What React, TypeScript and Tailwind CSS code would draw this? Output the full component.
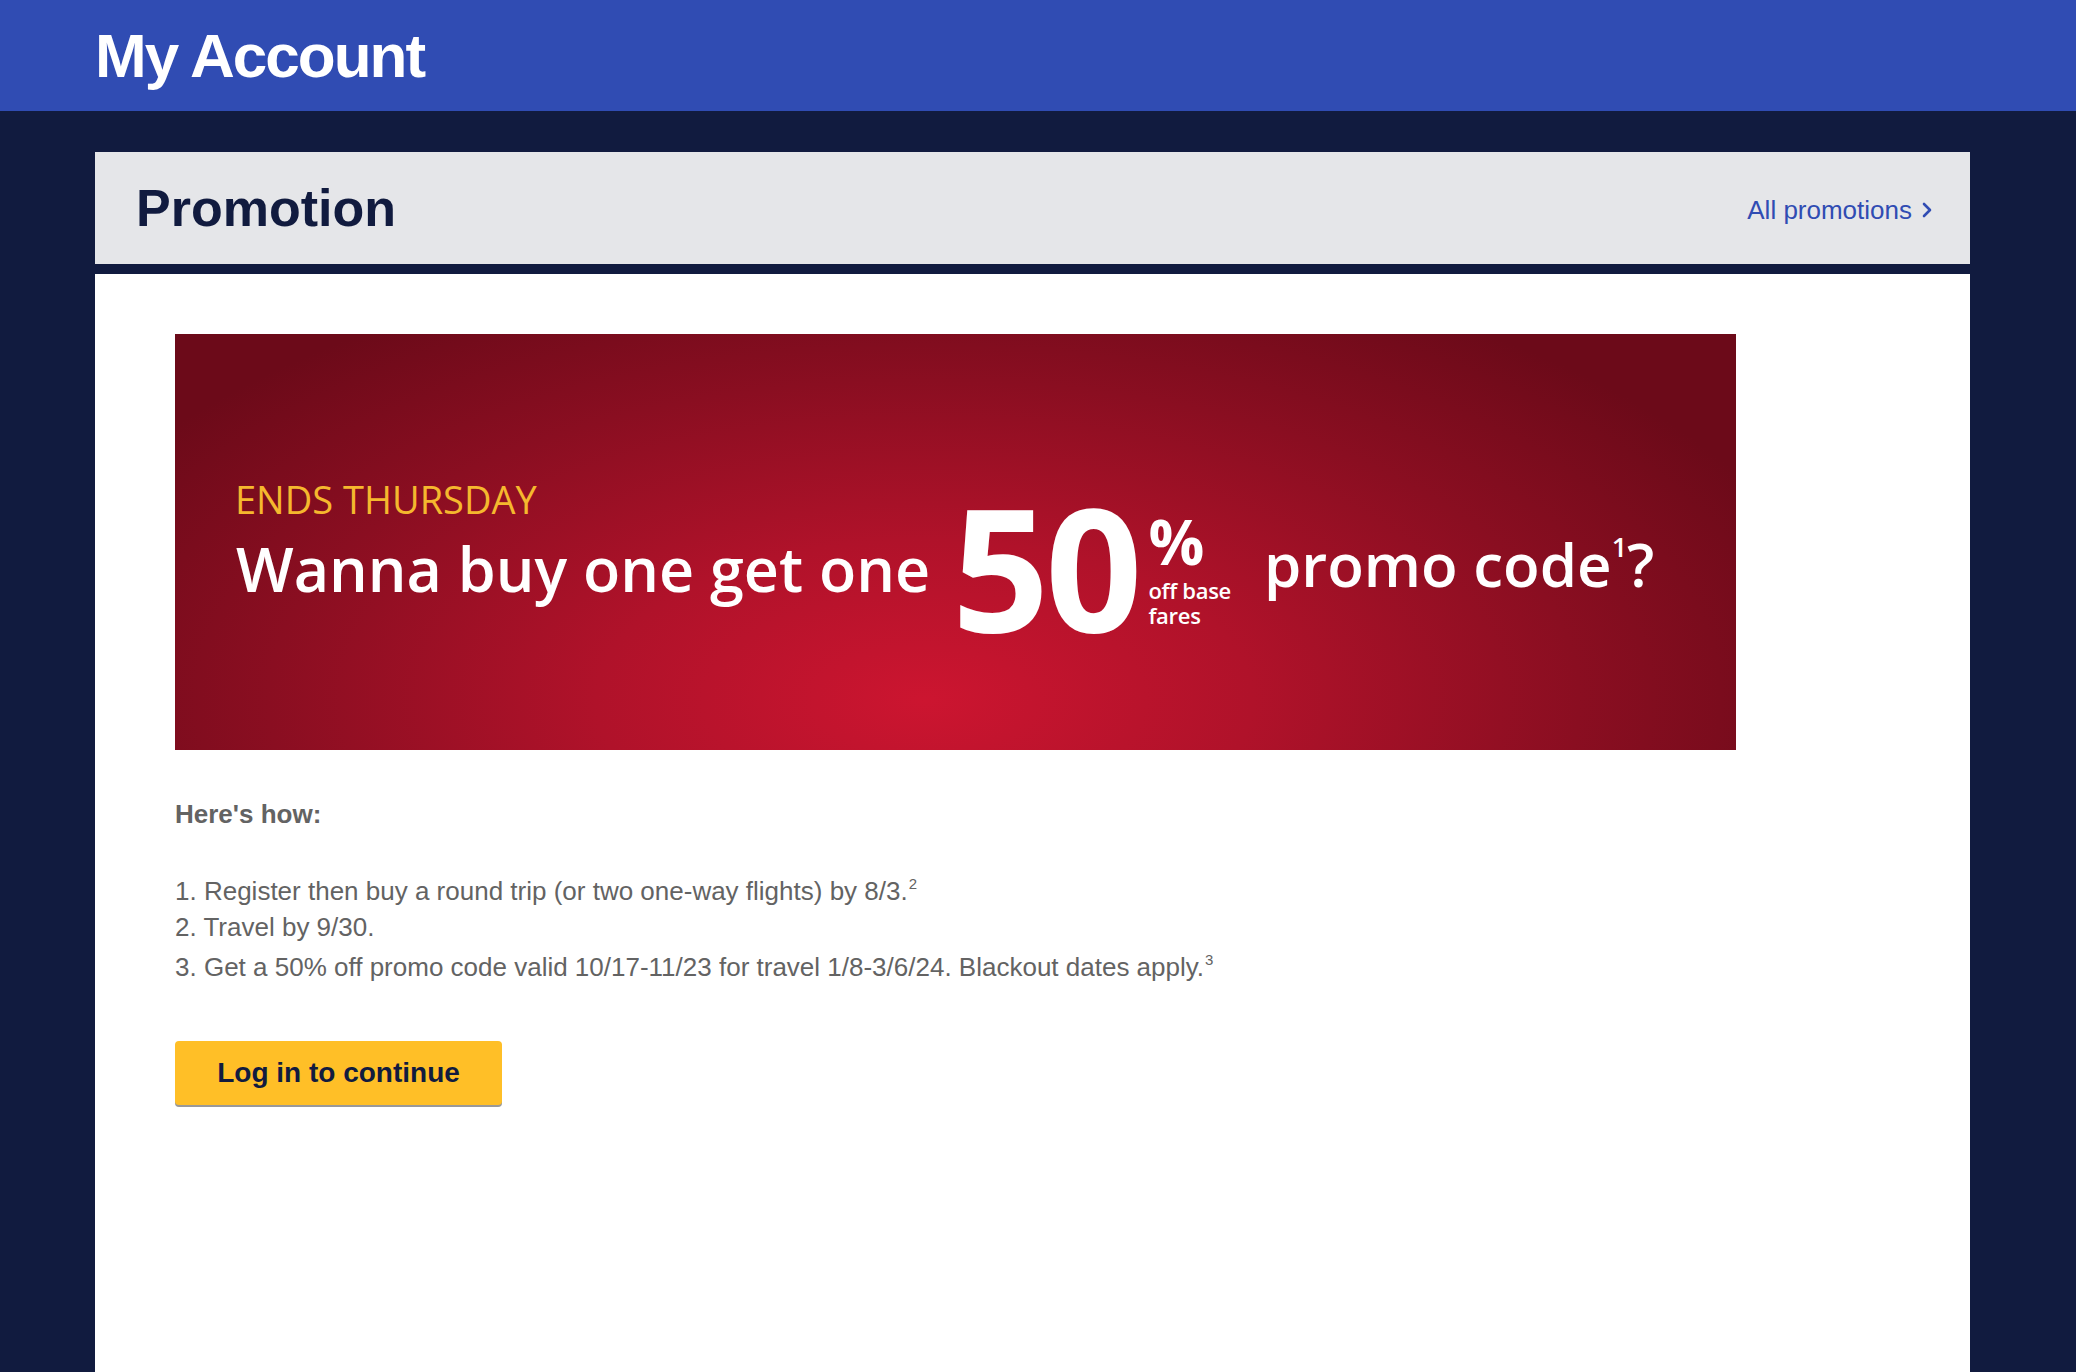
import React from "react";

const steps = [
  { text: "1. Register then buy a round trip (or two one-way flights) by 8/3.", note: "2" },
  { text: "2. Travel by 9/30.", note: "" },
  {
    text: "3. Get a 50% off promo code valid 10/17-11/23 for travel 1/8-3/6/24. Blackout dates apply.",
    note: "3",
  },
];

const PromoBanner: React.FC = () => (
  <div className="w-[1561px] h-[416px] pt-[146px] pl-[60px] bg-[radial-gradient(ellipse_60%_110%_at_48%_88%,#cc1530_0%,#b0122a_35%,#8a0e21_70%,#6c0a19_100%)] font-['Open_Sans',sans-serif] text-white">
    <div className="flex items-start">
      <div className="flex flex-col">
        <div className="text-[38px] leading-[38px] font-normal text-[#f5b82e]">ENDS THURSDAY</div>
        <div className="mt-[20px] ml-[1px] text-[61px] leading-none font-semibold whitespace-nowrap">
          Wanna buy one get one
        </div>
      </div>
      <div className="ml-[22px] mt-[1px] text-[170px] leading-none font-bold tracking-[-4px]">50</div>
      <div className="ml-[10px] mt-[30px] flex flex-col">
        <div className="text-[62px] leading-none font-bold">%</div>
        <div className="mt-[6px] text-[22px] leading-[25px] font-semibold tracking-[-0.3px]">
          off base
          <br />
          fares
        </div>
      </div>
      <div className="ml-[33px] mt-[54px] text-[60px] leading-none font-semibold whitespace-nowrap">
        promo code<span className="relative top-[-30px] text-[27px] font-semibold">1</span>?
      </div>
    </div>
  </div>
);

export default function App() {
  return (
    <div className="min-h-screen bg-[#111b3f] font-['Liberation_Sans',Arial,sans-serif]">
      <header className="h-[111px] bg-[#304cb3] flex items-center pl-[95px]">
        <h1 className="text-[62px] leading-none font-bold text-white tracking-[-2px]">My Account</h1>
      </header>

      <main className="ml-[95px] w-[1875px] pt-[41px]">
        {/* title bar */}
        <div className="h-[112px] bg-[#e5e6e9] flex items-center justify-between pl-[41px] pr-[38px]">
          <h2 className="text-[52px] leading-none font-bold text-[#111b3f]">Promotion</h2>
          <a href="#" className="flex items-center gap-[10px] text-[26px] text-[#304cb3] mt-[4px]">
            All promotions
            <svg width="10" height="16" viewBox="0 0 10 16" fill="none">
              <polyline points="2,2 8,8 2,14" stroke="#304cb3" strokeWidth="2.6" strokeLinecap="round" strokeLinejoin="round" />
            </svg>
          </a>
        </div>

        {/* content card */}
        <div className="mt-[10px] bg-white min-h-[1098px] px-[80px] pt-[60px]">
          <PromoBanner />

          <div className="mt-[46px] text-[#636363]">
            <p className="text-[26px] leading-[37px] font-bold">Here's how:</p>
            <ol className="mt-[40px] text-[26px] leading-[36px]">
              {steps.map((s, i) => (
                <li key={i} className={i === 2 ? "mt-[4px]" : ""}>
                  {s.text}
                  {s.note && (
                    <span className="relative top-[-11px] ml-[1px] text-[15px] leading-[0]">{s.note}</span>
                  )}
                </li>
              ))}
            </ol>
          </div>

          <button className="mt-[56px] h-[64px] w-[327px] rounded-[4px] bg-[#ffbf27] shadow-[0_2px_0_#999999] text-[28px] font-bold text-[#111b3f]">
            Log in to continue
          </button>
        </div>
      </main>
    </div>
  );
}
